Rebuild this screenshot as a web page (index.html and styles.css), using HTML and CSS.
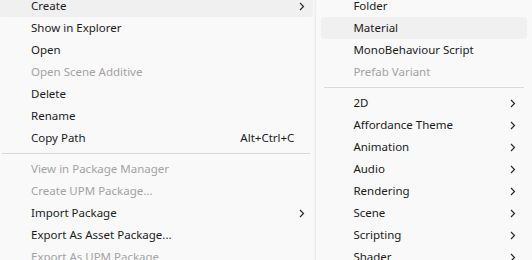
FILE: index.html
```html
<!DOCTYPE html>
<html lang="en">
<head>
    <meta charset="UTF-8">
    <meta name="viewport" content="width=device-width, initial-scale=1.0">
    <title>context-menu</title>
    <link rel="stylesheet" href="styles.css">
</head>
<body>
    <div id="menus">
        <div class="menu" id="main">
            <div class="item hover"><span class="label">Create</span><svg class="arrow" viewBox="0 0 6 9"><polyline points="1,1 4.5,4.5 1,8"/></svg></div>
            <div class="item"><span class="label">Show in Explorer</span></div>
            <div class="item"><span class="label">Open</span></div>
            <div class="item off"><span class="label">Open Scene Additive</span></div>
            <div class="item"><span class="label">Delete</span></div>
            <div class="item"><span class="label">Rename</span></div>
            <div class="item"><span class="label">Copy Path</span><span class="key">Alt+Ctrl+C</span></div>
            <div class="sep"></div>
            <div class="item off"><span class="label">View in Package Manager</span></div>
            <div class="item off"><span class="label">Create UPM Package...</span></div>
            <div class="item"><span class="label">Import Package</span><svg class="arrow" viewBox="0 0 6 9"><polyline points="1,1 4.5,4.5 1,8"/></svg></div>
            <div class="item"><span class="label">Export As Asset Package...</span></div>
            <div class="item off"><span class="label">Export As UPM Package</span></div>
        </div>

        <div class="menu" id="sub">
            <div class="item"><span class="label">Folder</span></div>
            <div class="item hover"><span class="label">Material</span></div>
            <div class="item"><span class="label">MonoBehaviour Script</span></div>
            <div class="item off"><span class="label">Prefab Variant</span></div>
            <div class="sep"></div>
            <div class="item"><span class="label">2D</span><svg class="arrow" viewBox="0 0 6 9"><polyline points="1,1 4.5,4.5 1,8"/></svg></div>
            <div class="item"><span class="label">Affordance Theme</span><svg class="arrow" viewBox="0 0 6 9"><polyline points="1,1 4.5,4.5 1,8"/></svg></div>
            <div class="item"><span class="label">Animation</span><svg class="arrow" viewBox="0 0 6 9"><polyline points="1,1 4.5,4.5 1,8"/></svg></div>
            <div class="item"><span class="label">Audio</span><svg class="arrow" viewBox="0 0 6 9"><polyline points="1,1 4.5,4.5 1,8"/></svg></div>
            <div class="item"><span class="label">Rendering</span><svg class="arrow" viewBox="0 0 6 9"><polyline points="1,1 4.5,4.5 1,8"/></svg></div>
            <div class="item"><span class="label">Scene</span><svg class="arrow" viewBox="0 0 6 9"><polyline points="1,1 4.5,4.5 1,8"/></svg></div>
            <div class="item"><span class="label">Scripting</span><svg class="arrow" viewBox="0 0 6 9"><polyline points="1,1 4.5,4.5 1,8"/></svg></div>
            <div class="item"><span class="label">Shader</span><svg class="arrow" viewBox="0 0 6 9"><polyline points="1,1 4.5,4.5 1,8"/></svg></div>
        </div>
    </div>
</body>
</html>
```

FILE: styles.css
```css
body {
    margin: 0;
    background-color: #f9f9f9;
    font-family: "Noto Sans", "Noto Sans CJK KR", sans-serif;
    font-size: 11.5px;
    color: #1b1b1b;
    overflow: hidden;
}
#menus {
    display: flex;
    margin-top: -5px;
    margin-left: -6px;
    height: 280px;
}
.menu {
    background-color: #f9f9f9;
    display: flex;
    flex-direction: column;
}
#main {
    width: 315px;
    padding: 0 2px 0 5px;
}
#sub {
    width: 206px;
    padding: 0 5px;
    border-left: 1px solid #ececec;
    box-shadow: -1px 0 2px rgba(0, 0, 0, 0.03);
}
.item {
    height: 22px;
    flex-shrink: 0;
    display: flex;
    align-items: center;
    padding: 0 11px 0 32px;
    border-radius: 4px;
}
#main .item {
    padding-right: 8px;
}
.item .label {
    flex: 1;
    white-space: nowrap;
    padding-bottom: 1px;
}
.hover {
    background-color: #f0f0f0;
}
.off {
    color: #a3a3a3;
}
.key {
    margin-right: 11px;
    padding-bottom: 1px;
}
.arrow {
    width: 6px;
    height: 9px;
    fill: none;
    stroke: #2a2a2a;
    stroke-width: 1.2;
}
.sep {
    flex-shrink: 0;
    height: 1px;
    margin: 4px 3px;
    background-color: #d9d9d9;
}
```
